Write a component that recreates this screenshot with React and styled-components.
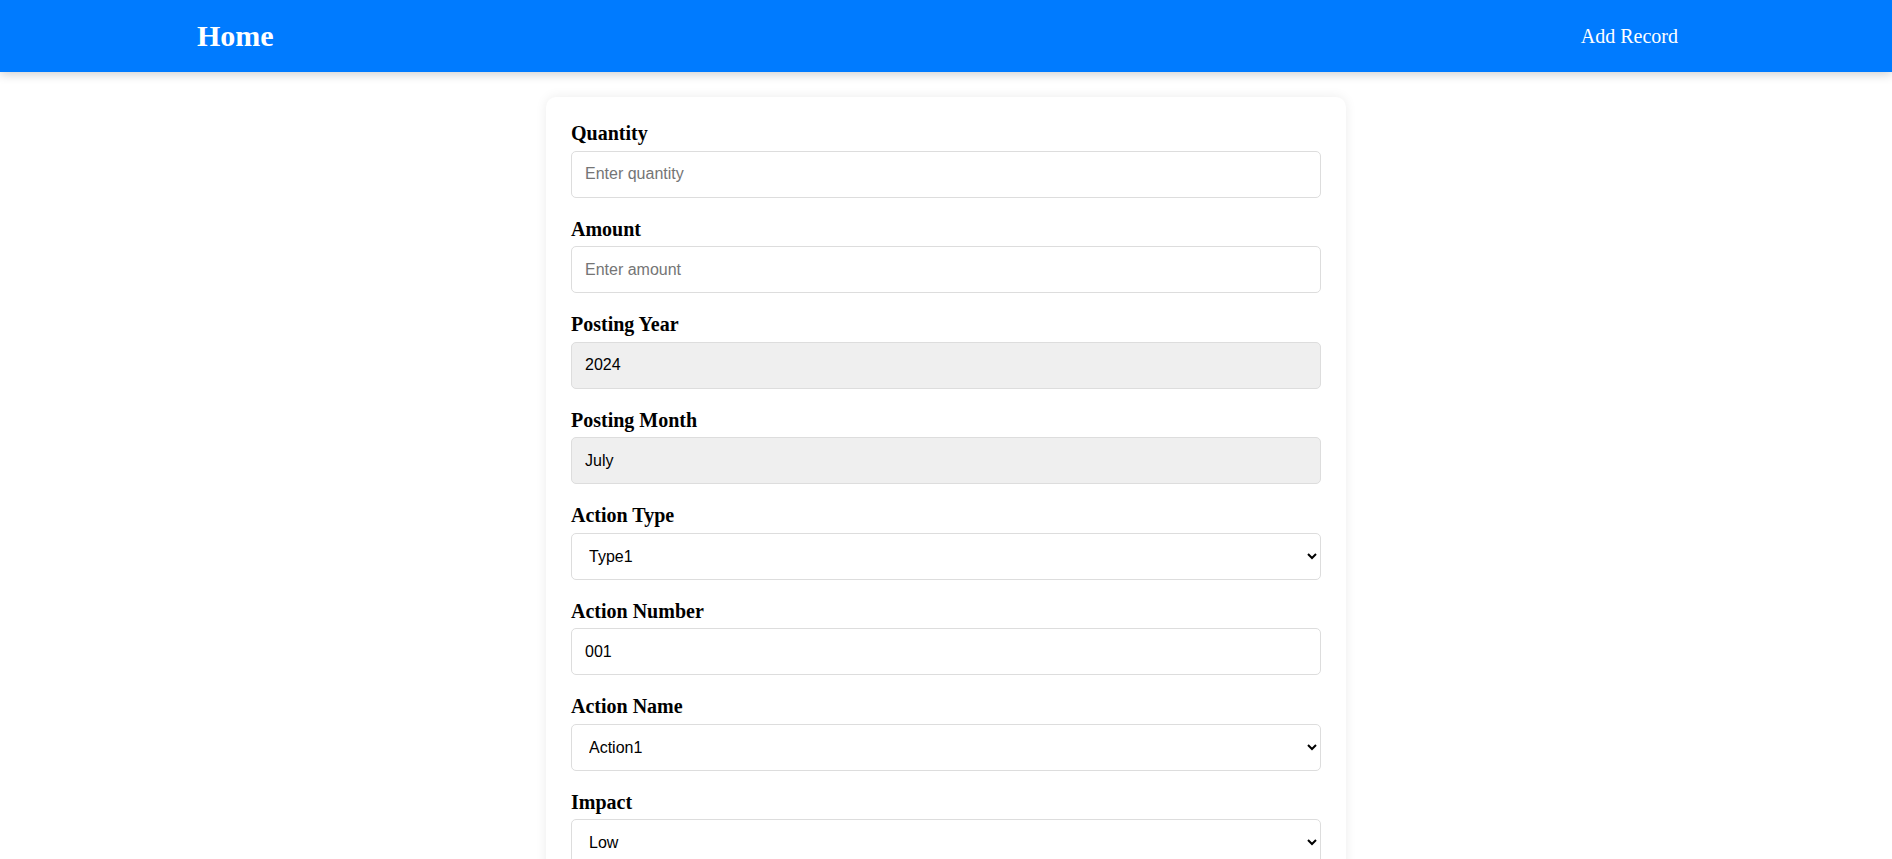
import React from 'react';
import styled, { createGlobalStyle } from 'styled-components';

const GlobalStyle = createGlobalStyle`
  body {
    margin: 0;
    background: #fff;
    font-family: "Liberation Serif", "Times New Roman", serif;
  }
  * {
    box-sizing: border-box;
  }
`;

const Navbar = styled.nav`
  height: 72px;
  background: #007bff;
  display: flex;
  align-items: center;
  justify-content: space-between;
  padding: 0 214px 0 197px;
  box-shadow: 0 2px 10px rgba(0, 0, 0, 0.2);
  color: #fff;
`;

const Brand = styled.h1`
  margin: 0;
  font-size: 30px;
  font-weight: bold;
`;

const NavLink = styled.a`
  color: #fff;
  font-size: 20px;
  text-decoration: none;
  cursor: pointer;
`;

const Card = styled.form`
  width: 800px;
  margin: 25px auto 40px;
  padding: 25px;
  background: #fff;
  border-radius: 10px;
  box-shadow: 0 0 12px rgba(0, 0, 0, 0.08);
`;

const Field = styled.div`
  display: flex;
  flex-direction: column;
  margin-bottom: 20px;
`;

const Label = styled.label`
  font-size: 20px;
  font-weight: bold;
  color: #000;
  margin-bottom: 5.5px;
`;

const Input = styled.input`
  width: 100%;
  height: 47px;
  padding: 0 13px;
  font-family: "Liberation Sans", Arial, sans-serif;
  font-size: 16px;
  color: #000;
  border: 1px solid #ddd;
  border-radius: 5px;
  background: ${({ disabled }) => (disabled ? '#efefef' : '#fff')};

  &::placeholder {
    color: #757575;
  }
  &:disabled {
    color: #000;
  }
`;

const Select = styled.select`
  width: 100%;
  height: 47px;
  padding: 0 13px;
  font-family: "Liberation Sans", Arial, sans-serif;
  font-size: 16px;
  color: #000;
  border: 1px solid #ddd;
  border-radius: 5px;
  background: #fff;
`;

const SubmitButton = styled.button`
  width: 100%;
  padding: 12px;
  font-size: 18px;
  color: #fff;
  background: #007bff;
  border: none;
  border-radius: 5px;
  cursor: pointer;
`;

const App = () => {
  return (
    <>
      <GlobalStyle />
      <Navbar>
        <Brand>Home</Brand>
        <NavLink>Add Record</NavLink>
      </Navbar>
      <Card onSubmit={(e) => e.preventDefault()}>
        <Field>
          <Label>Quantity</Label>
          <Input type="number" placeholder="Enter quantity" />
        </Field>
        <Field>
          <Label>Amount</Label>
          <Input type="number" placeholder="Enter amount" />
        </Field>
        <Field>
          <Label>Posting Year</Label>
          <Input type="text" value="2024" disabled readOnly />
        </Field>
        <Field>
          <Label>Posting Month</Label>
          <Input type="text" value="July" disabled readOnly />
        </Field>
        <Field>
          <Label>Action Type</Label>
          <Select defaultValue="Type1">
            <option>Type1</option>
            <option>Type2</option>
            <option>Type3</option>
          </Select>
        </Field>
        <Field>
          <Label>Action Number</Label>
          <Input type="text" defaultValue="001" />
        </Field>
        <Field>
          <Label>Action Name</Label>
          <Select defaultValue="Action1">
            <option>Action1</option>
            <option>Action2</option>
            <option>Action3</option>
          </Select>
        </Field>
        <Field>
          <Label>Impact</Label>
          <Select defaultValue="Low">
            <option>Low</option>
            <option>Mid</option>
            <option>High</option>
          </Select>
        </Field>
        <SubmitButton type="submit">Submit</SubmitButton>
      </Card>
    </>
  );
};

export default App;
